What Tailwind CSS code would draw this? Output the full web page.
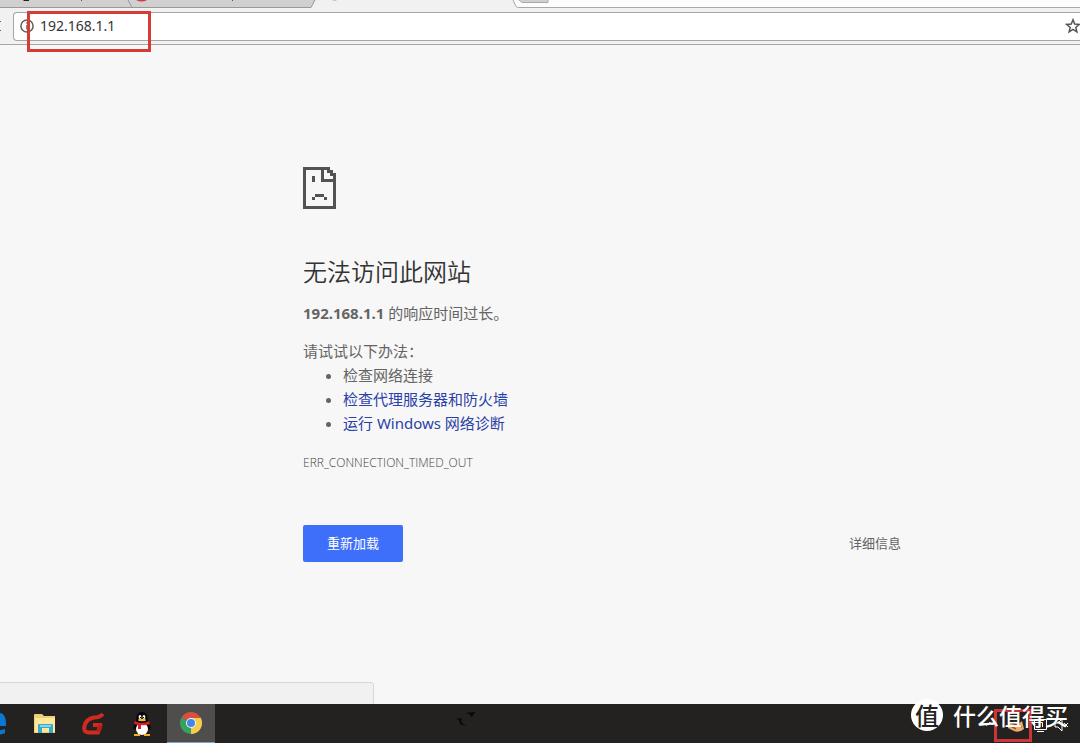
<!DOCTYPE html>
<html lang="zh-CN">
<head>
<meta charset="utf-8">
<meta name="viewport" content="width=device-width, initial-scale=1">
<title>192.168.1.1</title>
<script src="https://cdn.jsdelivr.net/npm/@tailwindcss/browser@4"></script>
</head>
<body class="flex min-h-screen flex-col overflow-hidden bg-[#f7f7f7] font-['Noto_Sans','Noto_Sans_CJK_SC',sans-serif] text-[#646464]">
  <!-- Tab strip -->
  <header class="relative bg-[#f1f1f1]">
    <svg class="block h-2 w-full" aria-hidden="true">
      <path d="M0 0H315L311 7.500H0Z" fill="#d0d0d0"/>
      <path d="M0 7.500H311L315 0M128 0L132 7.500" fill="none" stroke="#989898"/>
      <path d="M513 0H4000V7H516Z" fill="#fcfcfc"/>
      <path d="M513 0L516 6.500Q517 7.500 519 7.500H4000" fill="none" stroke="#a8a8a8"/>
      <path d="M519 0H548V2H522Z" fill="#cfcfcf"/>
      <path d="M519 0L522 2.500H548V0" fill="none" stroke="#aaa"/>
      <path d="M23 0h6v1h-5z" fill="#222"/>
      <path d="M81 0h1v1h-1zM232 0h1v1h-1z" fill="#555"/>
      <path d="M136 0h11q-5 3-11 0z" fill="#d93a3f"/>
      <path d="M332 0h5q-2 1-5 0z" fill="#999"/>
    </svg>
    <!-- Toolbar -->
    <div class="flex h-[37px] items-center border-b border-[#a6a6a6] pt-1 pb-1">
      <button aria-label="重新加载此页" class="flex w-[13px] items-center">
        <svg class="h-4 w-2" viewBox="0 0 8 16"><path d="M0 3h1v1H0zM0 12h1v1H0z" fill="#666"/></svg>
      </button>
      <div class="flex h-[29px] min-w-0 flex-1 items-center rounded-l-sm border border-r-0 border-[#a6a6a6] bg-white pl-[6px]">
        <svg class="size-[14px] shrink-0" viewBox="0 0 14 14" fill="none" stroke="#5f5f5f" stroke-width="1.500" aria-hidden="true"><circle cx="7" cy="7" r="6.100"/><path d="M7 6v4.500M7 3.300v1.500"/></svg>
        <input aria-label="地址" value="192.168.1.1" class="ml-[6px] min-w-0 flex-1 bg-transparent text-sm text-[#333] outline-none">
        <button aria-label="收藏" class="-mr-px shrink-0">
          <svg class="block size-4" viewBox="0 0 16 16" fill="none" stroke="#555" stroke-width="1.500"><path d="M8 1.800L9.700 6.100L14.300 6.400L10.800 9.400L11.900 13.900L8 11.400L4.100 13.900L5.200 9.400L1.700 6.400L6.300 6.100Z"/></svg>
        </button>
      </div>
    </div>
    <div class="absolute top-[11px] left-[27px] h-[41px] w-[124px] border-3 border-[#d33c37]"></div>
  </header>

  <!-- Error page -->
  <main class="relative flex-1 pt-[122px] pl-[303px]">
    <div class="max-w-[598px]">
      <svg class="block h-[42px] w-[33px]" viewBox="0 0 33 42" fill="#535353" shape-rendering="crispEdges" aria-hidden="true">
        <path d="M0 0H27V3H30V6H33V42H0ZM3 3V39H30V15H18V3ZM21 3V12H30V9H27V6H24V3Z" fill-rule="evenodd"/>
        <path d="M9 9h3v6H9zM12 27h9v3h-9zM9 30h3v3H9zM21 30h3v3h-3z"/>
      </svg>
      <h1 class="mt-[44px] font-['Noto_Sans_CJK_SC',sans-serif] text-2xl leading-[36px] font-[350] text-[#333]">无法访问此网站</h1>
      <p class="mt-3 text-[15px] leading-6"><strong class="font-bold">192.168.1.1</strong> 的响应时间过长。</p>
      <p class="mt-[14px] text-[15px] leading-6">请试试以下办法：</p>
      <ul class="list-disc pl-10 text-[15px] leading-6">
        <li>检查网络连接</li>
        <li><a href="#proxy" class="text-[#2a41a8]">检查代理服务器和防火墙</a></li>
        <li><a href="#diagnose" class="text-[#2a41a8]">运行 Windows 网络诊断</a></li>
      </ul>
      <p class="mt-4 font-['Open_Sans',sans-serif] text-xs leading-6 font-light text-[#444]">ERR_CONNECTION_TIMED_OUT</p>
      <div class="mt-[50px] flex items-center justify-between">
        <button class="h-[37px] w-[100px] rounded-xs bg-[#3e6ffb] text-[13px] text-white">重新加载</button>
        <button class="text-[13px]">详细信息</button>
      </div>
    </div>
    <div class="absolute bottom-0 left-0 h-[22px] w-[374px] rounded-tr-sm border-t border-r border-[#d8d8d8] bg-[#f1f1f1]"></div>
  </main>

  <!-- Taskbar -->
  <footer class="relative flex h-[39px] items-stretch bg-[#242220]">
    <nav class="-ml-[25px] flex" aria-label="任务栏">
      <button aria-label="Edge" class="flex w-12 items-center justify-center">
        <svg class="size-6" viewBox="0 0 24 24"><path d="M1 11C3 4 7 1 12 1C17 1 19 5 19 12V14H7C8 19 13 19 18 17V21C10 25 3 21 3 14Z" fill="#0878d2"/></svg>
      </button>
      <button aria-label="文件资源管理器" class="flex w-12 items-center justify-center pr-1">
        <svg class="h-5 w-[22px]" viewBox="0 0 22 20"><path d="M0 1q0-1 1-1h7l2 2h11v17H0z" fill="#eed176"/><path d="M1 4h20v14H1z" fill="#ffe89b"/><path d="M4 11q0-1 1-1h13l1 1v8h-4v-5H8v5H4z" fill="#37a9cf"/><path d="M6 11h11v2H6z" fill="#82d7e8"/></svg>
      </button>
      <button aria-label="G" class="flex w-12 items-center justify-center pr-1">
        <svg class="h-6 w-6" viewBox="0 0 24 24" fill="none" stroke="#d22a20" stroke-width="4" stroke-linejoin="round"><path d="M22 2Q19 5.500 13 5.500Q5 7 3.500 14Q2 21 9 20.500H17L19.500 13H12"/><path d="M19.500 13L17 20" stroke="#b91f19"/></svg>
      </button>
      <button aria-label="QQ" class="flex w-12 items-center justify-center pr-0.5">
        <svg class="h-6 w-5" viewBox="0 0 20 24"><path d="M4 9Q4 0 10 0T16 9L19 16L17 18L15 16V21H5V16L3 18L1 16Z" fill="#050505"/><ellipse cx="10" cy="17" rx="6" ry="6" fill="#fff"/><ellipse cx="8" cy="5" rx="1.400" ry="2" fill="#fff"/><ellipse cx="12" cy="5" rx="1.400" ry="2" fill="#fff"/><path d="M8 5h1v1H8zM11 5h1v1h-1z" fill="#111"/><ellipse cx="10" cy="8" rx="4" ry="1.200" fill="#f1b72b"/><path d="M3 9Q10 13 17 9L18 12Q13 14 9 13V17H6V13L2 12Z" fill="#d91f27"/><path d="M2 22h6v2H2zM12 22h6v2h-6z" fill="#eeb224"/></svg>
      </button>
      <button aria-label="Chrome" class="flex w-12 items-center justify-center border-b border-[#7ba5ce] bg-[#4f4e4d]">
        <svg class="size-[22px]" viewBox="0 0 22 22"><path d="M11 11L1.500 5.500A11 11 0 0 1 20.500 5.500Z" fill="#d95040"/><path d="M11 11L20.500 5.500A11 11 0 0 1 11 22Z" fill="#f5cd4e"/><path d="M11 11V22A11 11 0 0 1 1.500 5.500Z" fill="#35a260"/><path d="M11 6H20.700A11 11 0 0 1 11 22L15.300 13.500Z" fill="#f5cd4e"/><circle cx="11" cy="11" r="5" fill="#f2f4f7"/><circle cx="11" cy="11" r="4" fill="#4285ed"/></svg>
      </button>
    </nav>
    <svg class="absolute top-2 left-[456px] h-4 w-5" viewBox="0 0 20 16" aria-hidden="true"><path d="M10 1L19 0L16 5L13 2ZM0 7L6 6L5 10L10 14L4 12L3 8Z" fill="#080808"/></svg>
    <!-- Tray icons -->
    <svg class="absolute right-[6px] bottom-[10px] h-5 w-[90px]" viewBox="0 0 90 20" fill="none" aria-hidden="true">
      <path d="M2 13L6 9L9 12" stroke="#aaa"/>
      <path d="M24 9Q32 15 38 8L40 16Q34 21 28 17L24 15Z" fill="#efac6c"/><path d="M25 12L32 16M30 9L38 14" stroke="#a55334" stroke-width="1.500"/>
      <path d="M50.500 6.500H62.500V16.500H50.500ZM48 9.500H58.500V14M53 18.500H60" stroke="#fff"/>
      <path d="M71 10H74L78 6V18L74 14H71ZM80 10L84 14M84 10L80 14" stroke="#fff"/>
    </svg>
    <div class="absolute right-[48px] bottom-px h-[33px] w-[38px] border-3 border-[#cb3439]"></div>
    <!-- Brand mark -->
    <div class="absolute right-[12px] bottom-[12px] flex items-center gap-[10px] font-['Noto_Sans_CJK_SC',sans-serif] text-white">
      <span class="flex size-8 items-center justify-center rounded-full bg-white text-2xl leading-8 font-medium text-[#242220]">值</span>
      <span class="text-[23px] leading-8 font-medium whitespace-nowrap">什么值得买</span>
    </div>
  </footer>
</body>
</html>
